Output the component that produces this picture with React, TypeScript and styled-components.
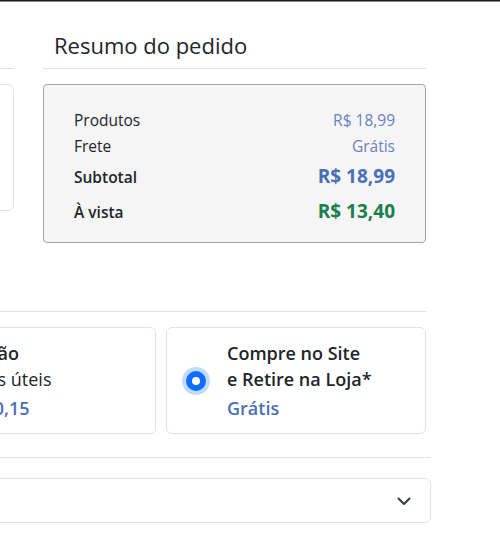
import React from 'react';
import styled, { createGlobalStyle } from 'styled-components';

const FONT = `'Open Sans', 'Noto Sans', 'Liberation Sans', sans-serif`;
const TEXT = '#212529';
const LINE = '#dee2e6';
const BLUE = '#4a6fb5';
const LIGHT_BLUE = '#6a7fbf';
const GREEN = '#1a7f4b';

const GlobalStyle = createGlobalStyle`
    html, body {
        margin: 0;
        padding: 0;
        background: #fff;
        overflow: hidden;
    }
    body {
        font-family: ${FONT};
        color: ${TEXT};
    }
`;

const TopEdge = styled.div`
    height: 0;
    border-top: 1px solid #1c1c1c;
    border-bottom: 1px solid #8c8c8c;
`;

// the visible window is the right part of a wider checkout page
const Page = styled.div`
    width: 726px;
    margin-left: -300px;
    padding-top: 27px;
`;

const TopRow = styled.div`
    display: grid;
    grid-template-columns: 314px 383px;
    column-gap: 29px;
    align-items: start;
`;

const Column = styled.div`
    display: flex;
    flex-direction: column;
`;

const Heading = styled.h4`
    margin: 0;
    padding: 0 0 7px 11px;
    font-size: 22px;
    font-weight: 500;
    line-height: 32px;
    border-bottom: 1px solid ${LINE};
`;

const AddressCard = styled.div`
    margin-top: 15px;
    height: 127px;
    border: 1px solid ${LINE};
    border-radius: 6px;
    box-sizing: border-box;
`;

const SummaryBox = styled.div`
    margin-top: 15px;
    height: 159px;
    box-sizing: border-box;
    padding: 23px 30px 0 30px;
    background: #f5f5f5;
    border: 1px solid #a3a6a9;
    border-radius: 4px;
`;

const SummaryRow = styled.div<{ strong?: boolean }>`
    display: flex;
    justify-content: space-between;
    align-items: baseline;
    font-size: 15.5px;
    line-height: ${props => (props.strong ? '34px' : '25.5px')};
    font-weight: ${props => (props.strong ? 600 : 400)};
`;

const SummaryValue = styled.span<{ tone: 'light' | 'blue' | 'green' }>`
    font-size: ${props => (props.tone === 'light' ? '15.5px' : '19px')};
    font-weight: ${props => (props.tone === 'light' ? 400 : 700)};
    color: ${props =>
        props.tone === 'green' ? GREEN : props.tone === 'blue' ? BLUE : LIGHT_BLUE};
`;

const Divider = styled.div<{ extend?: number }>`
    border-top: 1px solid ${LINE};
    margin-right: ${props => -(props.extend || 0)}px;
`;

const ShippingSection = styled.div`
    margin-top: 68px;
`;

const OptionsRow = styled.div`
    display: flex;
    justify-content: flex-end;
    gap: 10px;
    margin: 15px 0 23px;
`;

const OptionCard = styled.label`
    flex: 0 0 260px;
    height: 107px;
    box-sizing: border-box;
    display: flex;
    align-items: center;
    padding: 0 16px 0 18px;
    border: 1px solid ${LINE};
    border-radius: 6px;
    cursor: pointer;
`;

const Radio = styled.span<{ checked?: boolean }>`
    flex: 0 0 auto;
    width: 20px;
    height: 20px;
    box-sizing: border-box;
    border-radius: 50%;
    border: ${props => (props.checked ? '6px solid #0d6efd' : '1px solid #adb5bd')};
    background: #fff;
    box-shadow: ${props => (props.checked ? '0 0 0 4px rgba(13, 110, 253, 0.25)' : 'none')};
    margin: 0 21px 0 1px;
`;

const OptionText = styled.div`
    display: flex;
    flex-direction: column;
    font-size: 18px;
    line-height: 26px;
`;

const OptionTitle = styled.span`
    font-weight: 600;
`;

const OptionDetail = styled.span`
    font-weight: 400;
`;

const OptionPrice = styled.span`
    margin-top: 3px;
    font-weight: 600;
    color: ${BLUE};
`;

const SelectBox = styled.div`
    margin: 20px -5px 0 0;
    height: 45px;
    box-sizing: border-box;
    display: flex;
    align-items: center;
    justify-content: space-between;
    padding: 0 18px 0 16px;
    border: 1px solid ${LINE};
    border-radius: 6px;
    font-size: 16px;
    color: ${TEXT};
`;

const Chevron = () => (
    <svg width="16" height="16" viewBox="0 0 16 16" fill="none">
        <path d="M2.5 5.5 8 11l5.5-5.5" stroke="#343a40" strokeWidth="2" strokeLinecap="round" strokeLinejoin="round" />
    </svg>
);

const App = () => {
    return (
        <>
            <GlobalStyle />
            <TopEdge />
            <Page>
                <TopRow>
                    <Column>
                        <Heading>Endereço de entrega</Heading>
                        <AddressCard />
                    </Column>
                    <Column>
                        <Heading>Resumo do pedido</Heading>
                        <SummaryBox>
                            <SummaryRow>
                                <span>Produtos</span>
                                <SummaryValue tone="light">R$ 18,99</SummaryValue>
                            </SummaryRow>
                            <SummaryRow>
                                <span>Frete</span>
                                <SummaryValue tone="light">Grátis</SummaryValue>
                            </SummaryRow>
                            <SummaryRow strong>
                                <span>Subtotal</span>
                                <SummaryValue tone="blue">R$ 18,99</SummaryValue>
                            </SummaryRow>
                            <SummaryRow strong>
                                <span>À vista</span>
                                <SummaryValue tone="green">R$ 13,40</SummaryValue>
                            </SummaryRow>
                        </SummaryBox>
                    </Column>
                </TopRow>
                <ShippingSection>
                    <Divider />
                    <OptionsRow>
                        <OptionCard>
                            <Radio />
                            <OptionText>
                                <OptionTitle>Padrão</OptionTitle>
                                <OptionDetail>7 dias úteis</OptionDetail>
                                <OptionPrice>R$ 20,15</OptionPrice>
                            </OptionText>
                        </OptionCard>
                        <OptionCard>
                            <Radio checked />
                            <OptionText>
                                <OptionTitle>Compre no Site</OptionTitle>
                                <OptionTitle>e Retire na Loja*</OptionTitle>
                                <OptionPrice>Grátis</OptionPrice>
                            </OptionText>
                        </OptionCard>
                    </OptionsRow>
                    <Divider extend={5} />
                    <SelectBox>
                        <span />
                        <Chevron />
                    </SelectBox>
                </ShippingSection>
            </Page>
        </>
    );
};

export default App;
